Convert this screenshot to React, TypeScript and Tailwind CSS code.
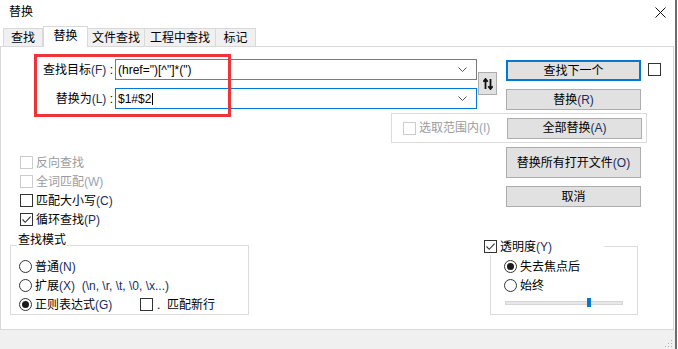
import type { ReactNode } from 'react';

const tabs = [
  { label: '查找', w: 'w-[40px]' },
  { label: '替换', w: 'w-[45px]', active: true },
  { label: '文件查找', w: 'w-[58px]' },
  { label: '工程中查找', w: 'w-[72px]' },
  { label: '标记', w: 'w-[41px]' },
];

function Key({ children, disabled = false }: { children: ReactNode; disabled?: boolean }) {
  return <span className={disabled ? 'text-[#9aa4b8]' : 'text-[#1c2d5e]'}>{children}</span>;
}

function Check({ checked = false, disabled = false }: { checked?: boolean; disabled?: boolean }) {
  return (
    <span
      className={`w-[13px] h-[13px] shrink-0 border bg-white flex items-center justify-center ${
        disabled ? 'border-[#cccccc]' : 'border-[#333333]'
      }`}
    >
      {checked && (
        <svg width="11" height="11" viewBox="0 0 11 11">
          <path d="M1.5 5.5 L4.2 8.3 L9.6 2.6" stroke="#333" strokeWidth="1.1" fill="none" />
        </svg>
      )}
    </span>
  );
}

function Radio({ checked = false }: { checked?: boolean }) {
  return (
    <span className="w-[13px] h-[13px] shrink-0 rounded-full border border-[#333333] bg-white flex items-center justify-center">
      {checked && <span className="w-[7px] h-[7px] rounded-full bg-[#1a1a1a]" />}
    </span>
  );
}

function Btn({ children, h = 'h-[21px]', primary = false }: { children: ReactNode; h?: string; primary?: boolean }) {
  return (
    <div
      className={`w-[135px] ${h} bg-[#e1e1e1] flex items-center justify-center ${
        primary ? 'border-2 border-[#0078d7]' : 'border border-[#adadad]'
      }`}
    >
      {children}
    </div>
  );
}

function Chevron() {
  return (
    <svg width="9" height="5" viewBox="0 0 9 5" className="shrink-0">
      <path d="M0.5 0.5 L4.5 4.5 L8.5 0.5" stroke="#555" strokeWidth="1" fill="none" />
    </svg>
  );
}

export default function App() {
  return (
    <div className="w-[678px] h-[349px] bg-white flex overflow-hidden text-[12px] leading-[16px] text-black font-['Liberation_Sans','Noto_Sans_CJK_SC',sans-serif]">
      <div className="w-[675px] flex flex-col">
        {/* Title bar */}
        <div className="h-[26px] flex items-center justify-between pl-[9px] pr-[9px] pb-[2px]">
          <span>替换</span>
          <svg width="11" height="11" viewBox="0 0 11 11">
            <path d="M0.5 0.5 L10.5 10.5 M10.5 0.5 L0.5 10.5" stroke="#111" strokeWidth="1" />
          </svg>
        </div>

        {/* Tabs */}
        <div className="h-[20px] flex items-end pl-[3px]">
          {tabs.map((t) =>
            t.active ? (
              <div
                key={t.label}
                className={`${t.w} h-[21px] -mb-px relative z-10 bg-white border-x border-t border-[#d9d9d9] flex items-center justify-center pb-[2px]`}
              >
                {t.label}
              </div>
            ) : (
              <div
                key={t.label}
                className={`${t.w} h-[18px] bg-[#f0f0f0] border border-b-0 border-[#d9d9d9] -ml-px first:ml-0 flex items-center justify-center`}
              >
                {t.label}
              </div>
            )
          )}
        </div>

        {/* Panel */}
        <div className="w-[674px] h-[284px] border border-[#d9d9d9] relative">
          {/* annotation */}
          <div className="absolute left-[33px] top-[7px] w-[197px] h-[63px] border-[3px] border-[#ee3438] pointer-events-none z-10" />

          {/* fields + main buttons */}
          <div className="flex items-start pt-[12px]">
            <div className="grid grid-cols-[114px_362px] gap-y-[8px]">
              <div className="h-[21px] flex items-center justify-end pr-[2px]">
                查找目标<Key>(F)</Key>&nbsp;:
              </div>
              <div className="h-[21px] border border-[#7a7a7a] flex items-center pl-[2px] pr-[9px]">
                <span className="flex-1">(href=")[^"]*(")</span>
                <Chevron />
              </div>
              <div className="h-[21px] flex items-center justify-end pr-[2px]">
                替换为<Key>(L)</Key>&nbsp;:
              </div>
              <div className="h-[21px] border border-[#0078d7] flex items-center pl-[2px] pr-[9px]">
                <span className="flex-1 flex items-center">
                  $1#$2<span className="w-px h-[12px] bg-black ml-px" />
                </span>
                <Chevron />
              </div>
            </div>

            <div className="ml-[1px] mt-[13px] w-[19px] h-[23px] bg-[#e1e1e1] border border-[#adadad] flex items-center justify-center">
              <svg width="10" height="12" viewBox="0 0 10 12">
                <path d="M2.5 11 V2 M0.3 3.8 L2.5 1 L4.7 3.8" stroke="#111" strokeWidth="1.8" fill="none" />
                <path d="M7.5 1 V10 M5.3 8.2 L7.5 11 L9.7 8.2" stroke="#111" strokeWidth="1.8" fill="none" />
              </svg>
            </div>

            <div className="ml-[9px] mt-[1px] flex flex-col gap-[8px]">
              <Btn primary>查找下一个</Btn>
              <Btn>
                替换<Key>(R)</Key>
              </Btn>
            </div>

            <div className="ml-[7px] mt-[4px]">
              <Check />
            </div>
          </div>

          {/* selection group */}
          <div className="mt-[3px] ml-[390px] w-[256px] h-[30px] border border-[#dcdcdc] flex items-center pl-[11px] pr-[4px]">
            <Check disabled />
            <span className="ml-[3px] text-[#9c9c9c]">
              选取范围内<Key disabled>(I)</Key>
            </span>
            <div className="ml-auto">
              <Btn>
                全部替换<Key>(A)</Key>
              </Btn>
            </div>
          </div>

          {/* options + other buttons */}
          <div className="grid grid-cols-[505px_135px]">
            <div className="pl-[19px] pt-[10px] flex flex-col">
              <div className="h-[19px] flex items-center gap-[3px] text-[#9c9c9c]">
                <Check disabled />
                反向查找
              </div>
              <div className="h-[19px] flex items-center gap-[3px] text-[#9c9c9c]">
                <Check disabled />
                <span>
                  全词匹配<Key disabled>(W)</Key>
                </span>
              </div>
              <div className="h-[19px] flex items-center gap-[3px]">
                <Check />
                <span>
                  匹配大小写<Key>(C)</Key>
                </span>
              </div>
              <div className="h-[19px] flex items-center gap-[3px]">
                <Check checked />
                <span>
                  循环查找<Key>(P)</Key>
                </span>
              </div>
            </div>
            <div className="pt-[4px] flex flex-col gap-[8px]">
              <Btn h="h-[31px]">
                替换所有打开文件<Key>(O)</Key>
              </Btn>
              <Btn>取消</Btn>
            </div>
          </div>

          {/* bottom groups */}
          <div className="flex items-start">
            <div className="ml-[9px] mt-[16px] w-[239px] h-[70px] border border-[#dcdcdc] relative pl-[8px] pt-[11px]">
              <span className="absolute left-[6px] top-[-14px] bg-white px-[1px]">查找模式</span>
              <div className="h-[19px] flex items-center gap-[3px]">
                <Radio />
                <span>
                  普通<Key>(N)</Key>
                </span>
              </div>
              <div className="h-[19px] flex items-center gap-[3px]">
                <Radio />
                <span>
                  扩展<Key>(X)&nbsp; (\n, \r, \t, \0, \x...)</Key>
                </span>
              </div>
              <div className="h-[19px] flex items-center">
                <div className="w-[121px] flex items-center gap-[3px]">
                  <Radio checked />
                  <span>
                    正则表达式<Key>(G)</Key>
                  </span>
                </div>
                <Check />
                <span className="ml-[4px]">.&nbsp; 匹配新行</span>
              </div>
            </div>

            <div className="ml-[241px] mt-[17px] w-[148px] h-[69px] border border-[#dcdcdc] relative pl-[13px] pt-[10px]">
              <div className="absolute left-[-7px] top-[-9px] w-[120px] h-[17px] bg-white flex items-center gap-[3px]">
                <Check checked />
                <span>
                  透明度<Key>(Y)</Key>
                </span>
              </div>
              <div className="h-[19px] flex items-center gap-[3px]">
                <Radio checked />
                失去焦点后
              </div>
              <div className="h-[19px] flex items-center gap-[3px]">
                <Radio />
                始终
              </div>
              <div className="mt-[6px] ml-[1px] w-[118px] h-[4px] bg-[#e7e7e7] border border-[#d6d6d6] relative">
                <span className="absolute left-[81px] top-[-4px] w-[4px] h-[9px] bg-[#0078d7]" />
              </div>
            </div>
          </div>
        </div>

        {/* Footer */}
        <div className="flex-1 bg-[#f0f0f0] flex justify-end items-end pr-[2px] pb-[1px]">
          <svg width="9" height="9" viewBox="0 0 9 9">
            <rect x="7" y="1" width="1" height="1" fill="#b5b5b5" />
            <rect x="4" y="4" width="1" height="1" fill="#b5b5b5" />
            <rect x="7" y="4" width="1" height="1" fill="#b5b5b5" />
            <rect x="1" y="7" width="1" height="1" fill="#b5b5b5" />
            <rect x="4" y="7" width="1" height="1" fill="#b5b5b5" />
            <rect x="7" y="7" width="1" height="1" fill="#b5b5b5" />
          </svg>
        </div>
      </div>
      <div className="w-[2px] bg-[#6d6d6d]" />
      <div className="w-[1px] bg-white" />
    </div>
  );
}
